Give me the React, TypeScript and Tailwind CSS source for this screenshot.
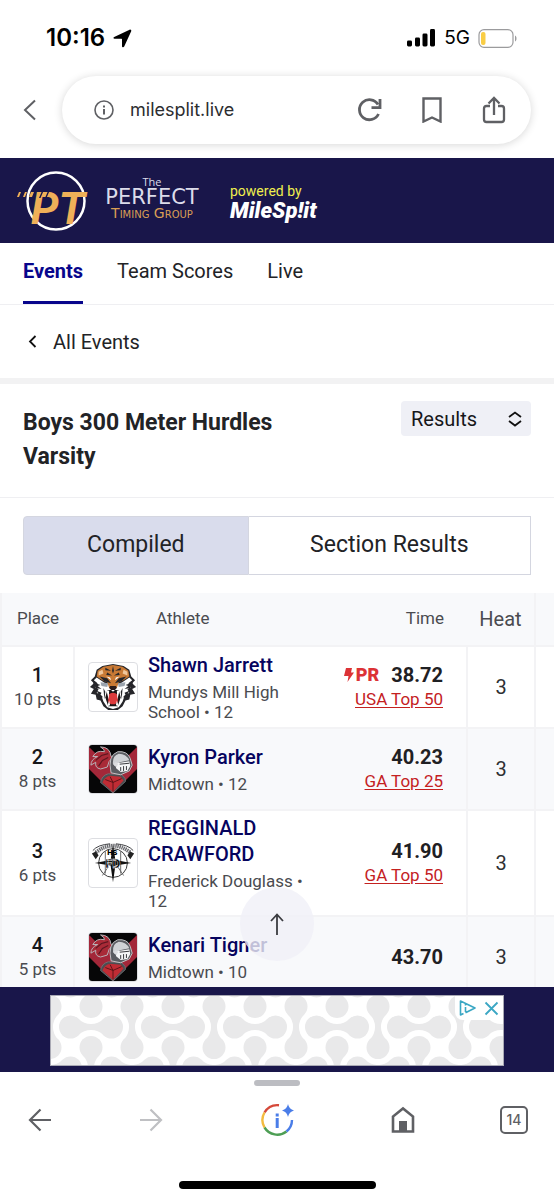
/**
 * Meet results page, viewed inside the mobile browser shell.
 *
 * Status bar and address bar on top, the scrolling results page in the
 * middle, the ad strip and the browser toolbar at the bottom.
 */
import { useRef, useState } from 'react';
import type { ReactNode } from 'react';

// ── Data ──────────────────────────────────────────────────────────────────────

type School = 'mundys' | 'midtown' | 'douglass';

interface Result {
  place: number;
  points: number;
  name: string;
  school: School;
  schoolName: string;
  grade: number;
  time: string;
  pr?: boolean;
  rank?: string;
  heat: number;
}

const RESULTS: Result[] = [
  { place: 1, points: 10, name: 'Shawn Jarrett', school: 'mundys', schoolName: 'Mundys Mill High School', grade: 12, time: '38.72', pr: true, rank: 'USA Top 50', heat: 3 },
  { place: 2, points: 8, name: 'Kyron Parker', school: 'midtown', schoolName: 'Midtown', grade: 12, time: '40.23', rank: 'GA Top 25', heat: 3 },
  { place: 3, points: 6, name: 'REGGINALD CRAWFORD', school: 'douglass', schoolName: 'Frederick Douglass', grade: 12, time: '41.90', rank: 'GA Top 50', heat: 3 },
  { place: 4, points: 5, name: 'Kenari Tigner', school: 'midtown', schoolName: 'Midtown', grade: 10, time: '43.70', heat: 3 },
];

const TABS = ['Events', 'Team Scores', 'Live'];

// ── School logos ──────────────────────────────────────────────────────────────

function TigerLogo() {
  return (
    <svg viewBox="0 0 50 50" className="h-full w-full" aria-hidden="true">
      <path d="M8 7 14 3 25 1 36 3 42 7 44 14 48 18 45 21 49 25 45 27 48 32 43 33 42 38 38 39 35 45 30 49 20 49 15 45 12 39 8 38 7 33 2 32 5 27 1 25 5 21 2 18 6 14Z" fill="#26262a" />
      <path d="M8 15 5 18 9 21 6 25 10 27 8 31 13 34 15 40 19 46 25 48 31 46 35 40 37 34 42 31 40 27 44 25 41 21 45 18 42 15 32 22 18 22Z" fill="#fff" />
      <path d="M9 8 15 4 25 2 35 4 41 8 42 14 36 18 31 20 29 26 21 26 19 20 14 18 8 14Z" fill="#c97a35" />
      <path d="M10 9 14 7 15 11 10 13ZM40 9 36 7 35 11 40 13Z" fill="#f0c79c" />
      <path d="m17 5 6 3-6-.500ZM33 5l-6 3 6-.500ZM25 3l1 5-1 3-1-3ZM19 10l5 3-6-.500ZM31 10l-5 3 6-.500ZM11 14l8 2 4 5-7-2ZM39 14l-8 2-4 5 7-2Z" fill="#26262a" />
      <path d="m18 14 4 1 1 3ZM32 14l-4 1-1 3Z" fill="#fff" />
      <path d="m12 20 8 1-1 4-6-1ZM38 20l-8 1 1 4 6-1Z" fill="#9aa3ad" />
      <path d="m4 20 8 3-3 1 4 3-6-1ZM8 29l5 2-1 2 3 3-4-1ZM46 20l-8 3 3 1-4 3 6-1ZM42 29l-5 2 1 2-3 3 4-1ZM15 26l2 4-1 8ZM35 26l-2 4 1 8Z" fill="#26262a" />
      <path d="M22 24h6l1 2-2 2h-4l-2-2Z" fill="#2a1c1c" />
      <path d="M19 28h12l2 8-3 9H20l-3-9Z" fill="#1b1517" />
      <path d="M20 33q5-4 10 0v8l-3 2h-4l-3-2Z" fill="#dc3a3c" />
      <path d="m18 28 3 1-.500 9ZM32 28l-3 1 .500 9ZM19 45l2-6 1 5ZM31 45l-2-6-1 5ZM23 28h4l-2 2Z" fill="#fff" />
    </svg>
  );
}

function KnightLogo() {
  return (
    <svg viewBox="0 0 50 50" className="h-full w-full" aria-hidden="true">
      <rect width="50" height="50" fill="#060607" />
      <path d="M0 2 10 12H40L50 2V25L25 50 0 25Z" fill="#a32739" />
      <path d="M23 12Q22 2 12 2q5 3 4 5-8-2-12 5l5 0Q2 15 2 21l5-3q-1 6 5 7l7-2q1-7 6-10Z" fill="#a92a37" stroke="#b9b9bd" strokeWidth="1" />
      <path d="m20 9-7 2-6 5M20 13l-6 3-4 6" stroke="#5e1720" strokeWidth="1.200" fill="none" />
      <path d="M12 39q1-7 8-9l14 1q5 4 4 7L25 50Z" fill="#4b4d51" stroke="#77797d" strokeWidth=".800" />
      <path d="M14 39q2-6 8-7l11 1 3 4-11 12Z" fill="#c02c34" />
      <path d="m17 36 8 3v9M34 35l-9 4M22 33l3 6" stroke="#5a1418" strokeWidth="1" fill="none" />
      <path d="M23 29Q19 11 30 7q10-1 13 7l2 7-3 6-9 4Z" fill="#5b5d62" stroke="#c3c5c8" strokeWidth="1" />
      <path d="M25 20q-1-9 6-11 8 0 11 7l-10 2-4 5Z" fill="#cfd2d5" />
      <path d="m29 19 13-2 1 5-3 5-7 1-5-4Z" fill="#f4f5f6" />
      <path d="m32 20 10-1M33 23v4M36 22v5M39 22v4" stroke="#333438" strokeWidth="1" />
      <circle cx="28" cy="20" r="2" fill="#dcdde0" />
    </svg>
  );
}

function CompassLogo() {
  return (
    <svg viewBox="0 0 50 50" className="h-full w-full" fill="none" aria-hidden="true">
      <path d="M7 14Q25 0 43 14" stroke="#6c6d71" strokeWidth="4" strokeDasharray="1.500 .700" />
      <path d="M4 12Q9 6 22 5M28 5Q41 6 46 12" stroke="#3c3d40" strokeWidth="1" />
      <path d="m3 15 4-2 3 4-3 4ZM47 15l-4-2-3 4 3 4Z" fill="#222" />
      <circle cx="25" cy="25" r="15" stroke="#333" strokeWidth="1" />
      <path d="M17 13v23M33 13v23M14 38l6-9M36 38l-6-9" stroke="#666" strokeWidth="1" />
      <path d="m25 6 2.500 16L44 25l-16.500 2.500L25 45l-2.500-17.500L6 25l16.500-3Z" fill="#111" />
      <text x="19" y="17" className="fill-black font-['Roboto'] text-[8px] font-black">HS</text>
      <text x="17" y="30" className="fill-black stroke-white stroke-[.4px] font-['Roboto'] text-[13px] font-black">FD</text>
    </svg>
  );
}

function SchoolLogo({ school }: { school: School }) {
  return (
    <div className="h-[50px] w-[50px] shrink-0 overflow-hidden rounded border border-[#dddee2] bg-white">
      {school === 'mundys' && <TigerLogo />}
      {school === 'midtown' && <KnightLogo />}
      {school === 'douglass' && <CompassLogo />}
    </div>
  );
}

// ── Browser shell ─────────────────────────────────────────────────────────────

function StatusBar() {
  return (
    <div className="flex items-center justify-between pt-6 pr-9 pl-[46px] font-['Inter',sans-serif]">
      <div className="flex items-center gap-2 text-2xl leading-7 font-semibold text-black">
        10:16
        <svg width="19" height="19" viewBox="0 0 19 19" fill="#000" aria-hidden="true">
          <path d="M1.200 8.100 16.600.700c1-.500 2 .400 1.600 1.500l-7 15.400c-.600 1.200-2.200.900-2.200-.400V10.300c0-.300-.200-.500-.500-.500H1.600C.200 9.800 0 8.700 1.200 8.100Z" />
        </svg>
      </div>
      <div className="flex items-center gap-2 text-[19px] leading-7 text-black">
        <svg width="29" height="18" viewBox="0 0 29 18" fill="#000" aria-hidden="true">
          <rect x="0" y="11.500" width="5" height="6" rx="1.400" />
          <rect x="8" y="8.500" width="5" height="9" rx="1.400" />
          <rect x="15.500" y="4.500" width="5" height="13" rx="1.400" />
          <rect x="23" y="0" width="5" height="17.500" rx="1.400" />
        </svg>
        5G
        <svg width="40" height="19" viewBox="0 0 40 19" fill="none" aria-hidden="true">
          <rect x="1" y=".700" width="34" height="17.600" rx="5" stroke="#9b9b9d" strokeWidth="1.200" />
          <rect x="3" y="3" width="4.500" height="13" rx="2" fill="#f9cd45" />
          <path d="M37 6.500c2 .800 2 5.200 0 6Z" fill="#9b9b9d" />
        </svg>
      </div>
    </div>
  );
}

function AddressBar() {
  return (
    <div className="flex items-center gap-6 pt-6 pr-[23px] pb-3.5 pl-[22px] text-[#5f6064]">
      <button type="button" aria-label="Back to results list">
        <svg width="16" height="22" viewBox="0 0 16 22" fill="none" stroke="currentColor" strokeWidth="2" aria-hidden="true">
          <path d="M13 1.500 3 11l10 9.500" />
        </svg>
      </button>
      <div className="flex h-[68px] flex-1 items-center rounded-full bg-white pr-6 pl-8 shadow-[0_1px_8px_rgba(0,0,0,0.16)]">
        <svg width="20" height="20" viewBox="0 0 20 20" fill="none" stroke="currentColor" strokeWidth="1.600" aria-hidden="true">
          <circle cx="10" cy="10" r="9" />
          <path d="M10 9v5.500M10 5.500v2" strokeWidth="2" />
        </svg>
        <span className="ml-4 flex-1 font-['Inter',sans-serif] text-lg text-[#2c2d30]">milesplit.live</span>
        <div className="flex items-center gap-9">
          <button type="button" aria-label="Reload">
            <svg width="26" height="26" viewBox="0 0 26 26" fill="none" stroke="currentColor" strokeWidth="2.800" aria-hidden="true">
              <path d="M21.500 17A10 10 0 1 1 21 7.500" />
              <path d="M23 2v8.600h-8.500" />
            </svg>
          </button>
          <button type="button" aria-label="Bookmark">
            <svg width="26" height="26" viewBox="0 0 26 26" fill="none" stroke="currentColor" strokeWidth="2.400" aria-hidden="true">
              <path d="M4.500 1.500h17v23L13 20.500l-8.500 4Z" />
            </svg>
          </button>
          <button type="button" aria-label="Share">
            <svg width="26" height="28" viewBox="0 0 26 28" fill="none" stroke="currentColor" strokeWidth="2.300" aria-hidden="true">
              <path d="M9 10H5.500Q3 10 3 12.500v11Q3 26 5.500 26h15q2.500 0 2.500-2.500v-11Q23 10 20.500 10H17" />
              <path d="M13 19V2.500M7.500 7.500 13 2l5.500 5.500" />
            </svg>
          </button>
        </div>
      </div>
    </div>
  );
}

function ToolButton({ label, children }: { label: string; children: ReactNode }) {
  return (
    <button type="button" aria-label={label} className="flex h-9 w-9 items-center justify-center">
      {children}
    </button>
  );
}

function BrowserToolbar() {
  return (
    <div className="flex flex-col items-center bg-white pt-2 pb-[11px]">
      <div className="h-1.5 w-[46px] rounded-full bg-[#bcbdc2]" />
      <div className="mt-4 flex w-full items-center justify-between px-[22px] text-[#5f6064]">
        <div className="flex gap-[75px]">
          <ToolButton label="Back">
            <svg width="24" height="24" viewBox="0 0 24 24" fill="none" stroke="currentColor" strokeWidth="2.200" aria-hidden="true">
              <path d="M23 12H2.500M12.500 1.500 2 12l10.500 10.500" />
            </svg>
          </ToolButton>
          <ToolButton label="Forward">
            <svg width="24" height="24" viewBox="0 0 24 24" fill="none" stroke="#bfc0c3" strokeWidth="2.200" aria-hidden="true">
              <path d="M1 12h20.500M11.500 1.500 22 12 11.500 22.500" />
            </svg>
          </ToolButton>
        </div>
        <ToolButton label="Page info">
          <svg width="34" height="34" viewBox="0 0 34 34" fill="none" strokeWidth="2.400" className="shrink-0" aria-hidden="true">
            <path d="M19 2.200A15 15 0 0 0 4.500 9.500" stroke="#d5493a" />
            <path d="M4.500 9.500a15 15 0 0 0 0 15" stroke="#f3bb3f" />
            <path d="M4.500 24.500a15 15 0 0 0 22 4" stroke="#4d9e54" />
            <path d="M26.500 28.500A15 15 0 0 0 32 17" stroke="#4a7de8" />
            <path d="M17.200 15v10M17.200 10.500v3" stroke="#4a7de8" strokeWidth="3" />
            <path d="M28 1q1 5.200 6 6.500-5 1.300-6 6.500-1-5.200-6-6.500 5-1.300 6-6.500Z" fill="#4a7de8" />
          </svg>
        </ToolButton>
        <div className="flex gap-[75px]">
          <ToolButton label="Home">
            <svg width="26" height="28" viewBox="0 0 26 28" fill="none" stroke="currentColor" strokeWidth="2.600" aria-hidden="true">
              <path d="M3 25.500V10.500l10-8 10 8v15Z" />
              <path d="M9 15h8v11H9Z" fill="currentColor" stroke="none" />
            </svg>
          </ToolButton>
          <ToolButton label="14 open tabs">
            <span className="flex h-7 w-7 shrink-0 items-center justify-center rounded-[5px] border-2 border-current font-['Inter',sans-serif] text-sm font-medium">
              14
            </span>
          </ToolButton>
        </div>
      </div>
      <div className="mt-[43px] h-2 w-[197px] rounded-full bg-black" />
    </div>
  );
}

// ── Page pieces ───────────────────────────────────────────────────────────────

function SiteHeader() {
  return (
    <header className="flex h-[85px] items-center bg-[#19164a] pl-4">
      <svg width="72" height="64" viewBox="0 0 72 64" className="shrink-0 overflow-visible" aria-hidden="true">
        <circle cx="40" cy="32" r="28.500" fill="none" stroke="#fff" strokeWidth="2.500" />
        <text x="15" y="55" className="fill-[#efb058] font-['Roboto'] text-[44px] font-bold italic">PT</text>
        <path d="M3 23h2l-2 5H1ZM9 23h2l-2 5H7ZM15 23h3l-2 5h-3Z" fill="#efb058" />
        <path d="M26 22h1.500l-3 7H23ZM32 22h1.500l-3 7H29Z" fill="#19164a" />
      </svg>
      <div className="flex w-[128px] flex-col items-center pb-1.5 font-['DejaVu_Sans',sans-serif]">
        <span className="font-['Open_Sans',sans-serif] text-[11px] leading-3 text-[#dcdcea]">The</span>
        <span className="text-[21px] leading-[19px] text-[#dcdcea]">PERFECT</span>
        <span className="text-sm leading-3 text-[#d99f55] [font-variant:small-caps]">Timing Group</span>
      </div>
      <div className="ml-3.5 flex flex-col font-['Roboto',sans-serif]">
        <span className="text-sm leading-5 text-[#f0ef4e]">powered by</span>
        <span className="text-[22px] leading-5 font-black text-white italic">MileSp!it</span>
      </div>
    </header>
  );
}

function ResultRow({ result, striped }: { result: Result; striped: boolean }) {
  return (
    <tr className={striped ? 'h-[82px] bg-[#f8f9fb]' : 'h-[82px] bg-white'}>
      <td className="border-2 border-[#f3f3f5] text-center">
        <div className="text-xl leading-6 font-medium text-[#16171a]">{result.place}</div>
        <div className="text-[17px] leading-6 text-[#4a4b50]">{`${result.points} pts`}</div>
      </td>
      <td className="border-y-2 border-[#f3f3f5] py-1 pl-[13px]">
        <div className="flex items-center gap-2.5">
          <SchoolLogo school={result.school} />
          <div className="flex-1">
            <a href="#athlete" className="block text-xl leading-[26px] font-medium text-[#06045e]">{result.name}</a>
            <div className="mt-1 text-[17px] leading-5 text-[#4a4b50]">{`${result.schoolName} • ${result.grade}`}</div>
          </div>
        </div>
      </td>
      <td className="border-y-2 border-[#f3f3f5] pr-[23px] text-right">
        <div className="flex items-center justify-end text-xl leading-6 font-bold text-[#1f2023]">
          {result.pr && (
            <span className="mr-3 flex items-center gap-0.5 text-lg leading-6 font-black text-[#dc3236]">
              <svg width="10" height="14" viewBox="0 0 10 14" fill="currentColor" aria-hidden="true">
                <path d="M2 0h6L7 4.500h3L3.500 14l1-6H0Z" />
              </svg>
              PR
            </span>
          )}
          {result.time}
        </div>
        {result.rank && (
          <a href="#rankings" className="block text-[17px] leading-6 text-[#c4211f] underline underline-offset-2">{result.rank}</a>
        )}
      </td>
      <td className="border-2 border-[#f3f3f5] text-center text-xl text-[#2e2f33]">{result.heat}</td>
      <td className="border-y-2 border-[#f3f3f5]" />
    </tr>
  );
}

function ResultsTable() {
  return (
    <table className="w-full table-fixed border-collapse">
      <colgroup>
        <col className="w-[73px]" />
        <col />
        <col className="w-[152px]" />
        <col className="w-[68px]" />
        <col className="w-[19px]" />
      </colgroup>
      <thead>
        <tr className="h-[53px] bg-[#f8f9fb] text-[17px] text-[#4a4b50]">
          <th className="border-l-2 border-[#f3f3f5] font-normal">Place</th>
          <th className="pl-[82px] text-left font-normal">Athlete</th>
          <th className="pr-[23px] text-right font-normal">Time</th>
          <th className="border-r-2 border-[#f3f3f5] text-xl font-normal">Heat</th>
          <td />
        </tr>
      </thead>
      <tbody>
        {RESULTS.map((result, i) => (
          <ResultRow key={result.place} result={result} striped={i % 2 === 1} />
        ))}
      </tbody>
    </table>
  );
}

// One link of the ad backdrop: two discs joined by a pinched neck.
function Link({ x, y, upright }: { x: number; y: number; upright: boolean }) {
  return (
    <g transform={`translate(${x} ${y}) rotate(${upright ? 90 : 0})`}>
      <circle cx="-20.500" cy="0" r="11.500" />
      <circle cx="20.500" cy="0" r="11.500" />
      <path d="M-12.400-8.100A17.500 17.500 0 0 0 12.400-8.100V8.100A17.500 17.500 0 0 0-12.400 8.100Z" />
    </g>
  );
}

function AdStrip() {
  const cells: { x: number; y: number; upright: boolean }[] = [];
  for (let row = -1; row <= 2; row++) {
    for (let col = -1; col <= 12; col++) {
      cells.push({ x: -1 + col * 41, y: 31 + row * 41, upright: (row + col) % 2 === 0 });
    }
  }

  return (
    <div className="bg-[#19164a] px-[50px] pt-2 pb-1.5">
      <div className="relative border border-[#a9a9b4] bg-white">
        <svg viewBox="0 0 452 69" preserveAspectRatio="xMidYMid slice" className="h-[69px] w-full" fill="#e9e9ea" aria-hidden="true">
          {cells.map(cell => (
            <Link key={`${cell.x}:${cell.y}`} {...cell} />
          ))}
        </svg>
        <div className="absolute top-0 right-0 flex items-center gap-2 rounded-bl-lg bg-white p-1">
          <a href="#adchoices" aria-label="AdChoices">
            <svg width="17" height="16" viewBox="0 0 17 16" fill="none" stroke="#3ba7c4" strokeWidth="1.600" strokeLinejoin="round" aria-hidden="true">
              <path d="M4.500 13.500 1.500 15V1L16 8 6.500 12.800M6.500 7v5M6.500 4v1.500" />
            </svg>
          </a>
          <button type="button" aria-label="Close ad">
            <svg width="15" height="15" viewBox="0 0 15 15" stroke="#3ba7c4" strokeWidth="1.800" aria-hidden="true">
              <path d="m1.500 1.500 12 12M13.500 1.500l-12 12" />
            </svg>
          </button>
        </div>
      </div>
    </div>
  );
}

// ── Main page ─────────────────────────────────────────────────────────────────

export default function App() {
  const [view, setView] = useState<'compiled' | 'section'>('compiled');
  const pageRef = useRef<HTMLDivElement>(null);

  return (
    <div className="flex h-screen flex-col bg-white">
      <StatusBar />
      <AddressBar />

      <div className="relative min-h-0 flex-1">
        <div ref={pageRef} className="h-full overflow-y-auto font-['Roboto',sans-serif] text-[#222326] [scrollbar-width:none]">
          <SiteHeader />

          <nav className="flex gap-[34px] border-b border-[#efeff2] px-[23px] text-xl">
            {TABS.map(tab => (
              <a
                key={tab}
                href="#tab"
                className={
                  tab === 'Events'
                    ? 'border-b-3 border-[#08068c] pt-4 pb-[18px] leading-6 font-bold text-[#08068c]'
                    : 'pt-4 pb-[18px] leading-6'
                }
              >
                {tab}
              </a>
            ))}
          </nav>

          <a href="#events" className="flex h-[73px] items-center gap-4 px-7 text-xl leading-6">
            <svg width="9" height="13" viewBox="0 0 9 13" fill="none" stroke="#111" strokeWidth="1.800" aria-hidden="true">
              <path d="M7.500 1 2 6.500 7.500 12" />
            </svg>
            All Events
          </a>
          <div className="h-1.5 bg-[#f2f2f3]" />

          <div className="flex items-start justify-between gap-4 border-b border-[#efeff2] px-[23px] pt-[17px] pb-[23px]">
            <h1 className="max-w-[300px] pt-[5px] text-[23px] leading-[34px] font-bold">Boys 300 Meter Hurdles Varsity</h1>
            <div className="relative">
              <select aria-label="View" className="h-[35px] w-[130px] appearance-none rounded bg-[#eff0f6] pl-2.5 text-xl text-[#16171a]">
                <option>Results</option>
              </select>
              <svg width="16" height="16" viewBox="0 0 16 16" fill="none" stroke="#111" strokeWidth="1.800" className="pointer-events-none absolute top-2.5 right-2" aria-hidden="true">
                <path d="m2 6 6-4.500L14 6M2 10l6 4.500 6-4.500" />
              </svg>
            </div>
          </div>

          <div className="flex px-[23px] py-[18px] text-[23px]">
            <button
              type="button"
              onClick={() => setView('compiled')}
              className={`h-[59px] flex-[225] rounded-l border border-[#d4d6e0] ${view === 'compiled' ? 'bg-[#d9dcec]' : 'bg-white'}`}
            >
              Compiled
            </button>
            <button
              type="button"
              onClick={() => setView('section')}
              className={`h-[59px] flex-[283] border border-l-0 border-[#d4d6e0] ${view === 'section' ? 'bg-[#d9dcec]' : 'bg-white'}`}
            >
              Section Results
            </button>
          </div>

          <ResultsTable />
        </div>

        <button
          type="button"
          aria-label="Scroll to top"
          onClick={() => pageRef.current?.scrollTo({ top: 0 })}
          className="absolute bottom-[26px] left-1/2 flex h-[74px] w-[74px] -translate-x-1/2 items-center justify-center rounded-full bg-[#f0f0f8]/80"
        >
          <svg width="14" height="22" viewBox="0 0 14 22" fill="none" stroke="#3b3c41" strokeWidth="1.800" aria-hidden="true">
            <path d="M7 22V2M1 8l6-6.500L13 8" />
          </svg>
        </button>
      </div>

      <AdStrip />
      <BrowserToolbar />
    </div>
  );
}
